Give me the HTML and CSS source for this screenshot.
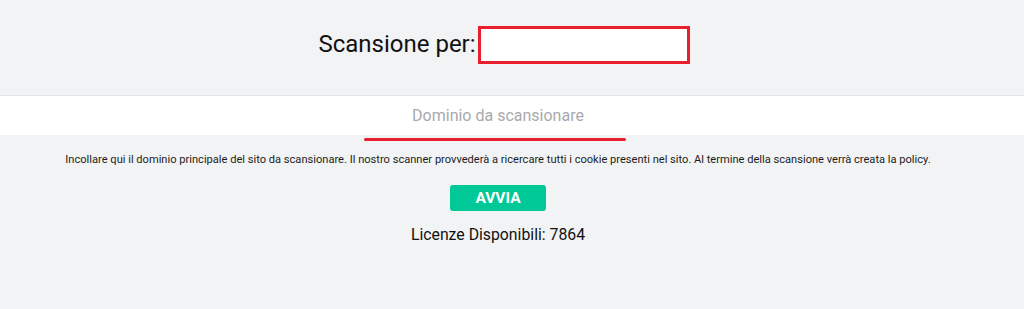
FILE: index.html
```html
<!DOCTYPE html>
<html lang="it">
<head>
<meta charset="utf-8">
<link rel="stylesheet" href="styles.css">
</head>
<body>
<div class="page">
  <div class="head">
    <span class="title">Scansione per:</span>
    <span class="target"></span>
  </div>
  <div class="strip">
    <div class="field">Dominio da scansionare</div>
  </div>
  <div class="underline"></div>
  <p class="desc">Incollare qui il dominio principale del sito da scansionare. Il nostro scanner provvederà a ricercare tutti i cookie presenti nel sito. Al termine della scansione verrà creata la policy.</p>
  <div class="actions"><button class="btn">AVVIA</button></div>
  <p class="lic">Licenze Disponibili: 7864</p>
</div>
</body>
</html>
```
FILE: styles.css
```css
html, body { margin: 0; padding: 0; }
body {
  background: #f2f3f5;
  font-family: Roboto, "Liberation Sans", sans-serif;
  color: #1a1a1a;
  width: 1024px;
  height: 309px;
  overflow: hidden;
}
.page {
  display: flex;
  flex-direction: column;
  align-items: center;
  padding-right: 28px;
}
.head {
  display: flex;
  align-items: center;
  gap: 2px;
  height: 95px;
  margin-left: 12px;
}
.title { font-size: 24px; color: #111; margin-top: -7px; }
.target {
  width: 206px;
  height: 32px;
  border: 3px solid #e8202e;
  background: #fff;
  margin-top: -6px;
}
.strip {
  align-self: stretch;
  margin-right: -28px;
  background: #fff;
  border-top: 1px solid #e4e5e8;
  height: 39px;
  display: flex;
  align-items: center;
  justify-content: center;
  padding-right: 28px;
}
.field { font-size: 16px; color: #a9a9ad; }
.underline {
  width: 262px;
  height: 3px;
  background: #e8202e;
  border-radius: 2px;
  margin-top: 3px;
  margin-left: -6px;
}
.desc { font-size: 11.1px; color: #1c1c1c; margin: 12px 0 0 0; }
.actions { margin-top: 19px; }
.btn {
  display: block;
  width: 96px;
  height: 26px;
  background: #00c896;
  border: none;
  border-radius: 3px;
  color: #fff;
  font-family: Roboto, "Liberation Sans", sans-serif;
  font-weight: 700;
  font-size: 15.5px;
  padding: 0;
}
.lic { font-size: 15.8px; color: #111; margin: 14px 0 0 0; }
```
